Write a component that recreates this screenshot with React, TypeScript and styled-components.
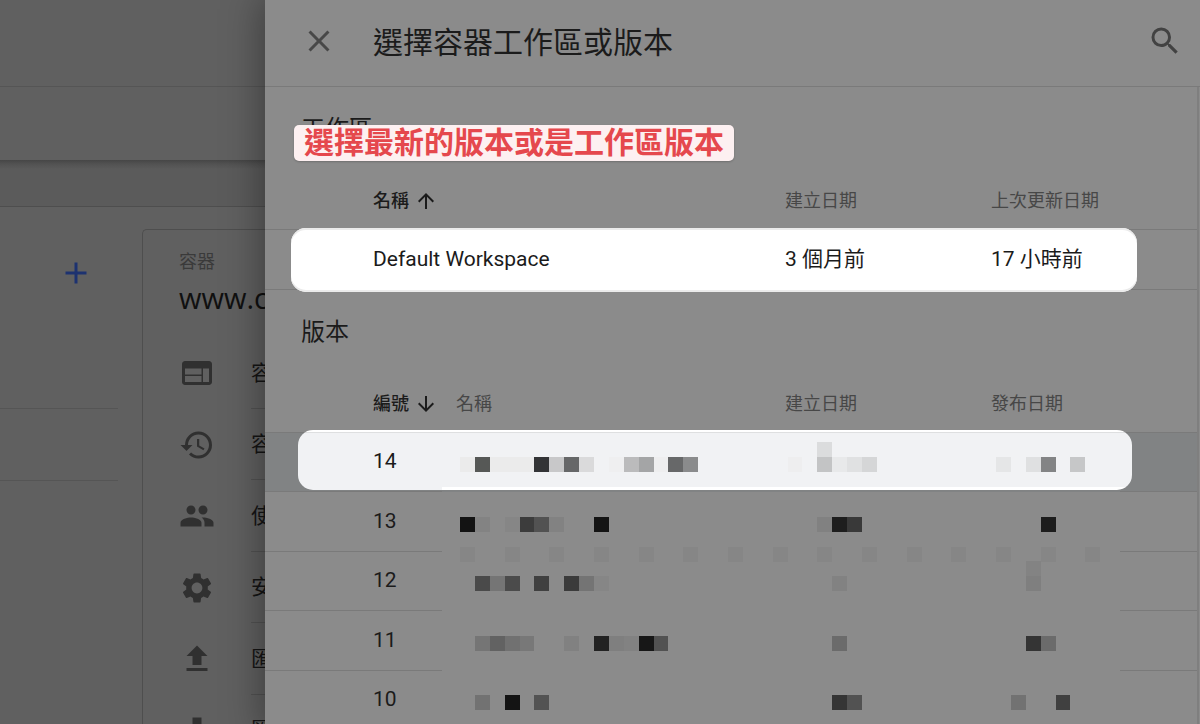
import React from "react";
import styled, { createGlobalStyle, css } from "styled-components";
import {
  MdAdd,
  MdArrowDownward,
  MdArrowUpward,
  MdClose,
  MdFileDownload,
  MdFileUpload,
  MdHistory,
  MdPeople,
  MdSearch,
  MdSettings,
  MdWeb,
} from "react-icons/md";

const GlobalStyle = createGlobalStyle`
  *, *::before, *::after { box-sizing: border-box; }
  body {
    margin: 0;
    background: #606060;
    color: #1b1b1b;
    font-family: Roboto, "Noto Sans CJK TC", sans-serif;
    font-size: 21px;
    line-height: 30px;
  }
  svg { flex: none; }
`;

const Page = styled.div`
  display: grid;
  grid-template-columns: 265px minmax(0, 1fr);
  height: 100vh;
  overflow: hidden;
`;

/* ---------- dimmed page behind the panel ---------- */

const Backdrop = styled.div`
  display: flex;
  flex-direction: column;
  min-width: 0;
  overflow: hidden;
  background: #606060;
`;

const BrandBar = styled.div`
  flex: none;
  height: 87px;
  border-bottom: 1px solid #555555;
`;

const TabBar = styled.div`
  flex: none;
  height: 73px;
`;

const Strip = styled.div`
  flex: none;
  height: 47px;
  background: linear-gradient(#464646, #525252 4px, #5b5b5b 9px);
  border-bottom: 1px solid #4e4e4e;
`;

const Columns = styled.div`
  flex: 1;
  display: grid;
  grid-template-columns: 118px minmax(0, 1fr);
  column-gap: 24px;
  min-height: 0;
`;

const SideItem = styled.div<{ $tall?: boolean }>`
  display: flex;
  justify-content: flex-end;
  height: ${(p) => (p.$tall ? 202 : 72)}px;
  padding: 48px 24px 0 0;
  border-bottom: 1px solid #555555;
`;

const IconButton = styled.button<{ $color: string }>`
  display: flex;
  align-items: center;
  justify-content: center;
  width: 36px;
  height: 36px;
  padding: 0;
  border: 0;
  background: none;
  color: ${(p) => p.$color};
`;

const Card = styled.div`
  min-width: 0;
  margin-top: 22px;
  padding: 18px 0 0 36px;
  border: 1px solid #4e4e4e;
  border-right: 0;
  border-bottom: 0;
  border-top-left-radius: 5px;
  white-space: nowrap;
`;

const CardCaption = styled.div`
  font-size: 18px;
  line-height: 28px;
  color: #3a3a3a;
`;

const CardDomain = styled.div`
  height: 61px;
  padding-top: 2px;
  font-family: "Open Sans", sans-serif;
  font-size: 29px;
  line-height: 40px;
  color: #101010;
`;

const MenuList = styled.ul`
  margin: 0;
  padding: 0;
  list-style: none;
`;

const MenuItem = styled.li`
  display: flex;
  align-items: center;
  height: 72px;
  color: #303030;
  &:nth-child(even) {
    height: 71px;
  }
`;

const MenuLabel = styled.a`
  display: flex;
  align-items: center;
  flex: 1;
  align-self: stretch;
  margin-left: 36px;
  border-bottom: 1px solid #525252;
  color: #151515;
  text-decoration: none;
`;

/* ---------- chooser panel ---------- */

const Panel = styled.main`
  position: relative;
  display: flex;
  flex-direction: column;
  min-width: 0;
  background: #8b8b8b;
  box-shadow: 0 0 36px 4px rgba(0, 0, 0, 0.36);
`;

const PanelHeader = styled.header`
  flex: none;
  display: flex;
  align-items: center;
  height: 87px;
  padding: 0 17px 5px 36px;
  border-bottom: 1px solid #7a7a7a;
`;

const PanelTitle = styled.h1`
  flex: 1;
  margin: 0 0 0 36px;
  padding-top: 4px;
  font-size: 30px;
  font-weight: 400;
  line-height: 40px;
`;

const PanelBody = styled.div`
  flex: 1;
  min-height: 0;
  margin-right: 1px;
  border-right: 2px solid #7f7f7f;
  overflow: hidden;
`;

const Section = styled.section`
  position: relative;
`;

const SectionTitle = styled.h2`
  margin: 0;
  height: 80px;
  padding: 2px 0 0 36px;
  font-size: 24px;
  font-weight: 400;
  line-height: 80px;
`;

const Callout = styled.div`
  position: absolute;
  z-index: 2;
  top: 38px;
  left: 29px;
  padding: 0 10px;
  border-radius: 5px;
  background: #fdf0f1;
  box-shadow: 0 1px 2px rgba(0, 0, 0, 0.2);
  color: #e5484d;
  font-size: 30px;
  font-weight: 700;
  line-height: 36px;
  white-space: nowrap;
`;

const Table = styled.table`
  width: 100%;
  table-layout: fixed;
  border-collapse: separate;
  border-spacing: 0;
`;

const Col = styled.col<{ $w?: number }>`
  width: ${(p) => (p.$w ? `${p.$w}px` : "auto")};
`;

const HeadCell = styled.th<{ $indent?: number; $active?: boolean }>`
  height: 63px;
  padding: 6px 0 0 ${(p) => p.$indent ?? 0}px;
  border-bottom: 1px solid #7a7a7a;
  color: ${(p) => (p.$active ? "#1b1b1b" : "#474747")};
  font-size: 18px;
  font-weight: ${(p) => (p.$active ? 500 : 400)};
  line-height: 28px;
  text-align: left;
  white-space: nowrap;
`;

const SortButton = styled.button`
  display: flex;
  align-items: center;
  gap: 5px;
  padding: 0;
  border: 0;
  background: none;
  color: inherit;
  font: inherit;
`;

const WorkspaceRow = styled.tr`
  position: relative;
  z-index: 1;
  height: 60px;
  background: linear-gradient(#7a7a7a, #7a7a7a) 0 100% / 100% 1px no-repeat;
`;

const VersionRow = styled.tr<{ $selected: boolean }>`
  position: relative;
  height: 60px;
  &:nth-child(odd) {
    height: 59px;
  }
  ${(p) =>
    p.$selected &&
    css`
      z-index: 1;
      background: #818384;
    `}
`;

const Cell = styled.td<{ $indent?: number; $line?: boolean }>`
  padding: 0 0 2px ${(p) => p.$indent ?? 0}px;
  ${(p) => p.$line && "border-bottom: 1px solid #7a7a7a;"}
  white-space: nowrap;
`;

const MosaicCell = styled.td<{ $indent?: number }>`
  padding: 4px 0 0 ${(p) => p.$indent ?? 0}px;
`;

const WorkspaceSpotlight = styled.span`
  position: absolute;
  z-index: -1;
  inset: -2px 60px -2px 26px;
  border-radius: 15px;
  background: #ffffff;
  box-shadow: inset 0 2px #ebebeb, inset 0 -2px #ebebeb;
`;

const VersionSpotlight = styled.span`
  position: absolute;
  z-index: -1;
  inset: -3px 65px 2px 33px;
  border-radius: 15px;
  background:
    linear-gradient(#ffffff, #ffffff) 0 0 / 100% 2px no-repeat,
    linear-gradient(#dedfe0, #dedfe0) 0 2px / 100% 1px no-repeat,
    linear-gradient(#ffffff, #ffffff) 144px 100% / 100% 3px no-repeat,
    #f1f2f4;
`;

const MosaicSvg = styled.svg`
  display: block;
  overflow: visible;
`;

/* A tile is [column, colour, row]; row 0 is the text line. */
type Tile = [number, string, number?];

const TILE = 670 / 45;

function Mosaic({ tiles, from }: { tiles: Tile[]; from: number }) {
  return (
    <MosaicSvg width="30" height="15" aria-hidden="true">
      {tiles.map(([k, fill, r = 0], i) => (
        <rect
          key={i}
          x={Math.round(4 + k * TILE) - from}
          y={r * 15}
          width={Math.round(4 + (k + 1) * TILE) - Math.round(4 + k * TILE)}
          height="15"
          fill={fill}
        />
      ))}
    </MosaicSvg>
  );
}

const dots = (a: number, b: number): Tile[] => {
  const out: Tile[] = [];
  for (let k = a; k <= b; k += 3) out.push([k, "#868686", 2]);
  return out;
};

interface Version {
  id: number;
  name: Tile[];
  created: Tile[];
  published: Tile[];
}

const versions: Version[] = [
  {
    id: 14,
    name: [
      [0, "#ebebeb"], [1, "#565856"], [2, "#ebebeb"], [3, "#ebebeb"], [4, "#ebebeb"],
      [5, "#333436"], [6, "#c8c8c9"], [7, "#666768"], [8, "#dadadb"], [10, "#efeff0"],
      [11, "#bbbbbc"], [12, "#a4a5a6"], [13, "#eeeeef"], [14, "#676869"], [15, "#8a8b8c"],
    ],
    created: [
      [22, "#eeeeef"], [24, "#dbdcdd", -1], [24, "#c3c4c5"], [25, "#e8e9ea"],
      [26, "#e0e1e2"], [27, "#d5d6d7"],
    ],
    published: [[36, "#e5e6e7"], [38, "#dfe0e1"], [39, "#838485"], [41, "#c6c7c8"]],
  },
  {
    id: 13,
    name: [
      [0, "#131313"], [1, "#838383"], [3, "#868686"], [4, "#3c3c3c"], [5, "#525252"],
      [6, "#828282"], [9, "#141414"], ...dots(0, 21),
    ],
    created: [[24, "#818181"], [25, "#1e1e1e"], [26, "#393939"], ...dots(24, 33)],
    published: [[39, "#1d1d1d"], ...dots(36, 42)],
  },
  {
    id: 12,
    name: [
      [1, "#4a4a4a"], [2, "#757575"], [3, "#4b4b4b"], [5, "#404040"], [7, "#3b3b3b"],
      [8, "#747474"], [9, "#868686"],
    ],
    created: [[25, "#828282"]],
    published: [[38, "#838383", -1], [38, "#7f7f7f"]],
  },
  {
    id: 11,
    name: [
      [1, "#757575"], [2, "#626262"], [3, "#717171"], [4, "#787878"], [7, "#818181"],
      [9, "#222222"], [10, "#7f7f7f"], [11, "#828282"], [12, "#171717"], [13, "#525252"],
    ],
    created: [[25, "#6b6b6b"]],
    published: [[38, "#343434"], [39, "#6b6b6b"]],
  },
  {
    id: 10,
    name: [[1, "#727272"], [3, "#141414"], [5, "#535353"]],
    created: [[25, "#353535"], [26, "#525252"]],
    published: [[37, "#727272"], [40, "#404040"]],
  },
];

const menu = [
  { icon: MdWeb, label: "容器名稱" },
  { icon: MdHistory, label: "容器活動" },
  { icon: MdPeople, label: "使用者管理" },
  { icon: MdSettings, label: "安裝代碼" },
  { icon: MdFileUpload, label: "匯入容器" },
  { icon: MdFileDownload, label: "匯出容器" },
];

export default function App() {
  return (
    <>
      <GlobalStyle />
      <Page>
        <Backdrop>
          <BrandBar />
          <TabBar />
          <Strip />
          <Columns>
            <div>
              <SideItem $tall>
                <IconButton $color="#1d3270" aria-label="新增">
                  <MdAdd size={36} />
                </IconButton>
              </SideItem>
              <SideItem />
            </div>
            <Card>
              <CardCaption>容器</CardCaption>
              <CardDomain>www.c</CardDomain>
              <MenuList>
                {menu.map(({ icon: Icon, label }) => (
                  <MenuItem key={label}>
                    <Icon size={36} />
                    <MenuLabel href="#">{label}</MenuLabel>
                  </MenuItem>
                ))}
              </MenuList>
            </Card>
          </Columns>
        </Backdrop>

        <Panel>
          <PanelHeader>
            <IconButton $color="#484848" aria-label="關閉">
              <MdClose size={36} />
            </IconButton>
            <PanelTitle>選擇容器工作區或版本</PanelTitle>
            <IconButton $color="#424242" aria-label="搜尋">
              <MdSearch size={36} />
            </IconButton>
          </PanelHeader>

          <PanelBody>
            <Section>
              <SectionTitle>工作區</SectionTitle>
              <Callout>選擇最新的版本或是工作區版本</Callout>
              <Table>
                <colgroup>
                  <Col />
                  <Col $w={206} />
                  <Col $w={206} />
                </colgroup>
                <thead>
                  <tr>
                    <HeadCell $indent={108} $active>
                      <SortButton>
                        名稱
                        <MdArrowUpward size={24} />
                      </SortButton>
                    </HeadCell>
                    <HeadCell>建立日期</HeadCell>
                    <HeadCell>上次更新日期</HeadCell>
                  </tr>
                </thead>
                <tbody>
                  <WorkspaceRow>
                    <Cell $indent={108}>
                      <WorkspaceSpotlight />
                      Default Workspace
                    </Cell>
                    <Cell>3 個月前</Cell>
                    <Cell>17 小時前</Cell>
                  </WorkspaceRow>
                </tbody>
              </Table>
            </Section>

            <Section>
              <SectionTitle>版本</SectionTitle>
              <Table>
                <colgroup>
                  <Col $w={177} />
                  <Col />
                  <Col $w={206} />
                  <Col $w={129} />
                  <Col $w={77} />
                </colgroup>
                <thead>
                  <tr>
                    <HeadCell $indent={108} $active>
                      <SortButton>
                        編號
                        <MdArrowDownward size={24} />
                      </SortButton>
                    </HeadCell>
                    <HeadCell $indent={14}>名稱</HeadCell>
                    <HeadCell>建立日期</HeadCell>
                    <HeadCell>發布日期</HeadCell>
                    <HeadCell as="td" />
                  </tr>
                </thead>
                <tbody>
                  {versions.map((v, i) => (
                    <VersionRow key={v.id} $selected={i === 0}>
                      <Cell $indent={108} $line>
                        {i === 0 && <VersionSpotlight />}
                        {v.id}
                      </Cell>
                      <MosaicCell $indent={14}>
                        <Mosaic tiles={v.name} from={0} />
                      </MosaicCell>
                      <MosaicCell>
                        <Mosaic tiles={v.created} from={329} />
                      </MosaicCell>
                      <MosaicCell>
                        <Mosaic tiles={v.published} from={535} />
                      </MosaicCell>
                      <Cell $line />
                    </VersionRow>
                  ))}
                </tbody>
              </Table>
            </Section>
          </PanelBody>
        </Panel>
      </Page>
    </>
  );
}
